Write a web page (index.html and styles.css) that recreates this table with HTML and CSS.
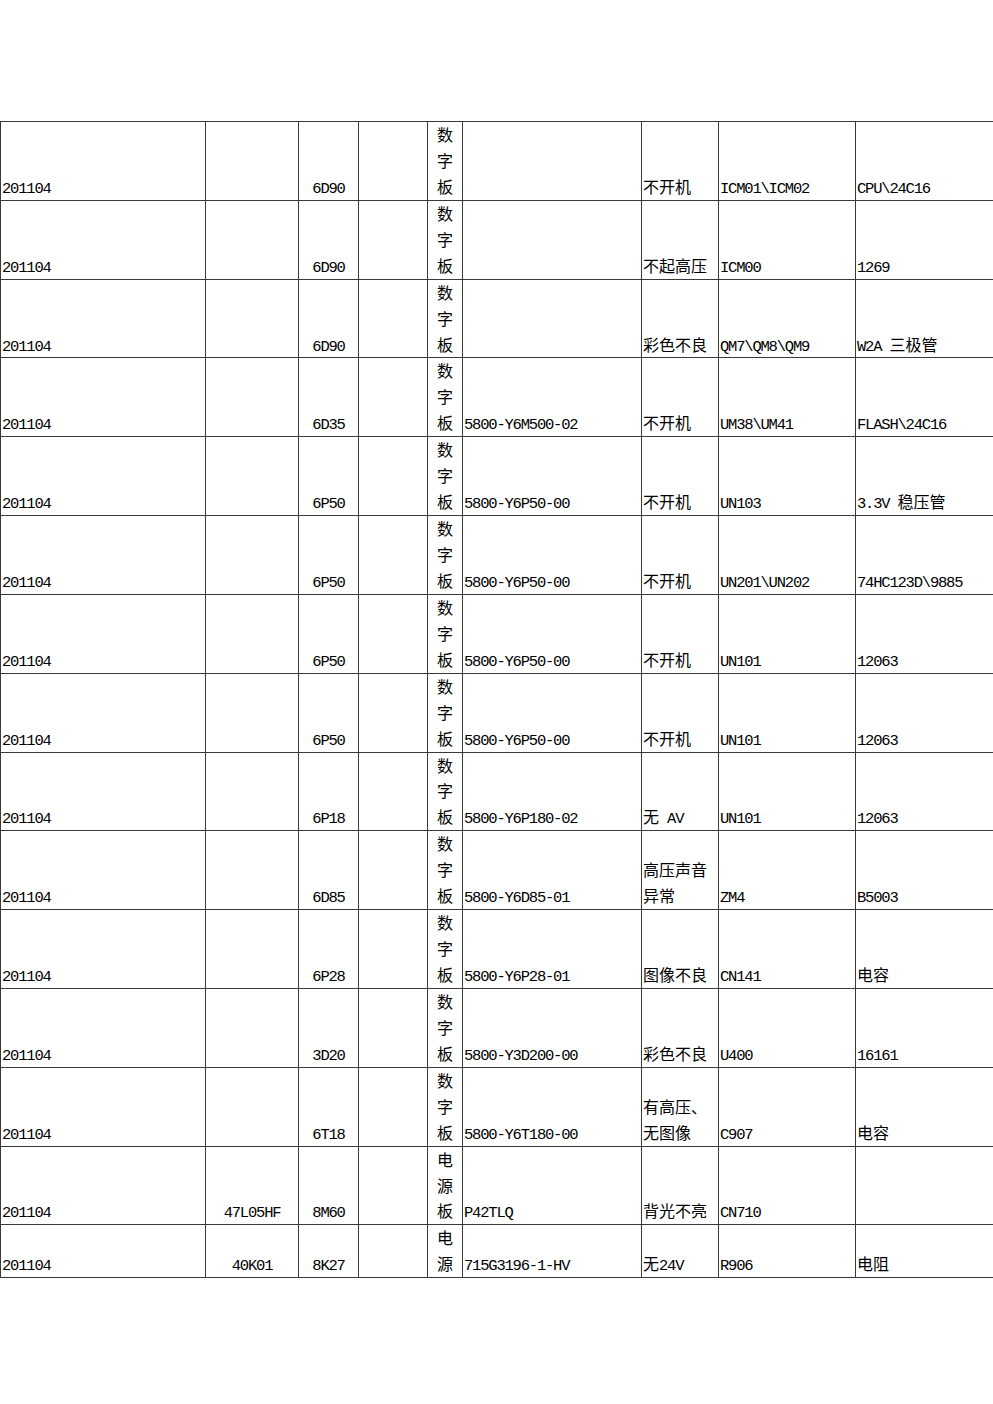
FILE: index.html
```html
<!DOCTYPE html>
<html lang="zh">
<head>
<meta charset="utf-8">
<title>维修记录</title>
<link rel="stylesheet" href="styles.css">
</head>
<body>
<div class="page">
<table class="sheet">
<colgroup>
<col class="c1"><col class="c2"><col class="c3"><col class="c4"><col class="c5"><col class="c6"><col class="c7"><col class="c8"><col class="c9">
</colgroup>
<tbody>
<tr><td><span class="m">201104</span></td><td class="ctr"></td><td class="ctr"><span class="m">6D90</span></td><td></td><td class="vt">数字板</td><td></td><td>不开机</td><td><span class="m">ICM01\ICM02</span></td><td><span class="m">CPU\24C16</span></td></tr>
<tr><td><span class="m">201104</span></td><td class="ctr"></td><td class="ctr"><span class="m">6D90</span></td><td></td><td class="vt">数字板</td><td></td><td>不起高压</td><td><span class="m">ICM00</span></td><td><span class="m">1269</span></td></tr>
<tr><td><span class="m">201104</span></td><td class="ctr"></td><td class="ctr"><span class="m">6D90</span></td><td></td><td class="vt">数字板</td><td></td><td>彩色不良</td><td><span class="m">QM7\QM8\QM9</span></td><td><span class="m">W2A </span>三极管</td></tr>
<tr><td><span class="m">201104</span></td><td class="ctr"></td><td class="ctr"><span class="m">6D35</span></td><td></td><td class="vt">数字板</td><td><span class="m">5800-Y6M500-02</span></td><td>不开机</td><td><span class="m">UM38\UM41</span></td><td><span class="m">FLASH\24C16</span></td></tr>
<tr><td><span class="m">201104</span></td><td class="ctr"></td><td class="ctr"><span class="m">6P50</span></td><td></td><td class="vt">数字板</td><td><span class="m">5800-Y6P50-00</span></td><td>不开机</td><td><span class="m">UN103</span></td><td><span class="m">3.3V </span>稳压管</td></tr>
<tr><td><span class="m">201104</span></td><td class="ctr"></td><td class="ctr"><span class="m">6P50</span></td><td></td><td class="vt">数字板</td><td><span class="m">5800-Y6P50-00</span></td><td>不开机</td><td><span class="m">UN201\UN202</span></td><td><span class="m">74HC123D\9885</span></td></tr>
<tr><td><span class="m">201104</span></td><td class="ctr"></td><td class="ctr"><span class="m">6P50</span></td><td></td><td class="vt">数字板</td><td><span class="m">5800-Y6P50-00</span></td><td>不开机</td><td><span class="m">UN101</span></td><td><span class="m">12063</span></td></tr>
<tr><td><span class="m">201104</span></td><td class="ctr"></td><td class="ctr"><span class="m">6P50</span></td><td></td><td class="vt">数字板</td><td><span class="m">5800-Y6P50-00</span></td><td>不开机</td><td><span class="m">UN101</span></td><td><span class="m">12063</span></td></tr>
<tr><td><span class="m">201104</span></td><td class="ctr"></td><td class="ctr"><span class="m">6P18</span></td><td></td><td class="vt">数字板</td><td><span class="m">5800-Y6P180-02</span></td><td>无<span class="m"> AV</span></td><td><span class="m">UN101</span></td><td><span class="m">12063</span></td></tr>
<tr><td><span class="m">201104</span></td><td class="ctr"></td><td class="ctr"><span class="m">6D85</span></td><td></td><td class="vt">数字板</td><td><span class="m">5800-Y6D85-01</span></td><td>高压声音异常</td><td><span class="m">ZM4</span></td><td><span class="m">B5003</span></td></tr>
<tr><td><span class="m">201104</span></td><td class="ctr"></td><td class="ctr"><span class="m">6P28</span></td><td></td><td class="vt">数字板</td><td><span class="m">5800-Y6P28-01</span></td><td>图像不良</td><td><span class="m">CN141</span></td><td>电容</td></tr>
<tr><td><span class="m">201104</span></td><td class="ctr"></td><td class="ctr"><span class="m">3D20</span></td><td></td><td class="vt">数字板</td><td><span class="m">5800-Y3D200-00</span></td><td>彩色不良</td><td><span class="m">U400</span></td><td><span class="m">16161</span></td></tr>
<tr><td><span class="m">201104</span></td><td class="ctr"></td><td class="ctr"><span class="m">6T18</span></td><td></td><td class="vt">数字板</td><td><span class="m">5800-Y6T180-00</span></td><td>有高压、无图像</td><td><span class="m">C907</span></td><td>电容</td></tr>
<tr><td><span class="m">201104</span></td><td class="ctr"><span class="m">47L05HF</span></td><td class="ctr"><span class="m">8M60</span></td><td></td><td class="vt">电源板</td><td><span class="m">P42TLQ</span></td><td>背光不亮</td><td><span class="m">CN710</span></td><td></td></tr>
<tr><td><span class="m">201104</span></td><td class="ctr"><span class="m">40K01</span></td><td class="ctr"><span class="m">8K27</span></td><td></td><td class="vt">电源</td><td><span class="m">715G3196-1-HV</span></td><td>无<span class="m">24V</span></td><td><span class="m">R906</span></td><td>电阻</td></tr>
</tbody>
</table>
</div>
</body>
</html>
```

FILE: styles.css
```css
html, body {
  margin: 0;
  padding: 0;
  background: #ffffff;
}

.page {
  padding-top: 121px;
  width: 993px;
}

.sheet {
  border-collapse: collapse;
  table-layout: fixed;
  width: 993px;
  font-family: "Noto Sans CJK SC", sans-serif;
  font-size: 16px;
  line-height: 25.93px;
  color: #000000;
}

.c1 { width: 205px; }
.c2 { width: 93px; }
.c3 { width: 60px; }
.c4 { width: 69px; }
.c5 { width: 35px; }
.c6 { width: 179px; }
.c7 { width: 77px; }
.c8 { width: 137px; }
.c9 { width: 138px; }

.sheet td {
  border: 1px solid #3a3a3a;
  padding: 0 0 0 1px;
  vertical-align: bottom;
  text-align: left;
  white-space: normal;
  word-break: break-all;
  overflow: hidden;
}

.sheet td.ctr {
  text-align: center;
  padding: 0;
}

.sheet td.vt {
  text-align: center;
  padding: 0 8px;
}

.m {
  font-family: "Liberation Mono", monospace;
  font-size: 15.5px;
  line-height: 1;
  letter-spacing: -1.2px;
  vertical-align: baseline;
}
```
